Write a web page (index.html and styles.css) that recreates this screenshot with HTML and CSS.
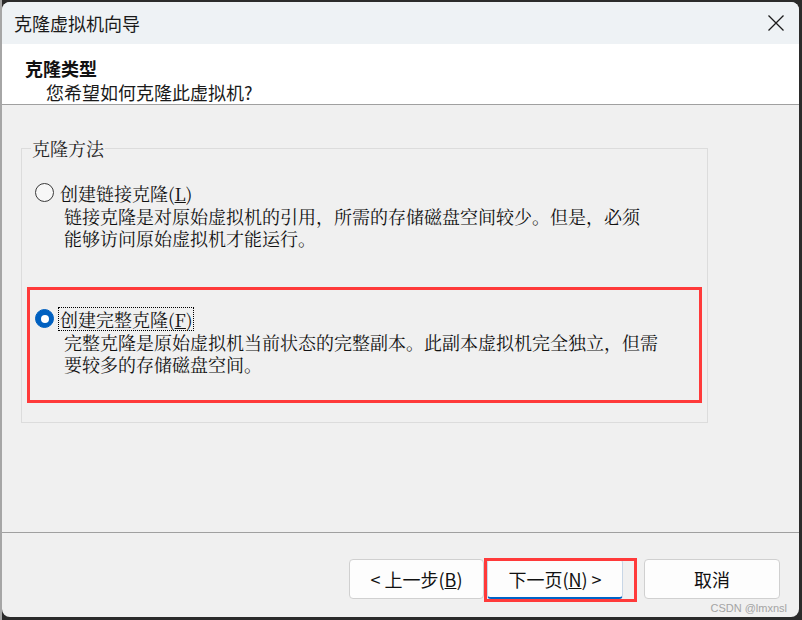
FILE: index.html
```html
<!DOCTYPE html>
<html lang="zh-CN">
<head>
<meta charset="utf-8">
<title>克隆虚拟机向导</title>
<link rel="stylesheet" href="styles.css">
</head>
<body>
<div class="dialog">
  <div class="titlebar">
    <span class="title">克隆虚拟机向导</span>
    <button class="close" aria-label="关闭">
      <svg width="16" height="16" viewBox="0 0 16 16"><path d="M0.5 0.5L15.5 15.5M15.5 0.5L0.5 15.5" stroke="#1b1b1b" stroke-width="1.3" fill="none"/></svg>
    </button>
  </div>
  <div class="header">
    <div class="h-title">克隆类型</div>
    <div class="h-sub">您希望如何克隆此虚拟机?</div>
  </div>
  <div class="content">
    <fieldset class="group">
      <legend>克隆方法</legend>
      <div class="option first">
        <div class="opt-row"><span class="radio"></span><span class="opt-label">创建链接克隆(<u>L</u>)</span></div>
        <div class="opt-desc">链接克隆是对原始虚拟机的引用，所需的存储磁盘空间较少。但是，必须<br>能够访问原始虚拟机才能运行。</div>
      </div>
      <div class="highlight">
        <div class="option">
          <div class="opt-row"><span class="radio checked"></span><span class="opt-label focused">创建完整克隆(<u>F</u>)</span></div>
          <div class="opt-desc">完整克隆是原始虚拟机当前状态的完整副本。此副本虚拟机完全独立，但需<br>要较多的存储磁盘空间。</div>
        </div>
      </div>
    </fieldset>
  </div>
  <div class="footer">
    <button class="btn btn-back">&lt; 上一步(<u>B</u>)</button>
    <button class="btn btn-next">下一页(<u>N</u>) &gt;</button>
    <button class="btn btn-cancel">取消</button>
  </div>
  <span class="watermark">CSDN @lmxnsl</span>
</div>
</body>
</html>
```

FILE: styles.css
```css
html, body {
  margin: 0;
  height: 100%;
}
body {
  background: linear-gradient(to right, #a6a6a6 0, #a6a6a6 2px, #2b2b2b 2px);
  padding: 2px 3px 3px 2px;
  box-sizing: border-box;
  font-family: "Noto Sans CJK SC", "Noto Sans", sans-serif;
  color: #1a1a1a;
}
.dialog {
  position: relative;
  width: 797px;
  height: 615px;
  background: #f0f0f0;
  border-radius: 8px;
  overflow: hidden;
  display: flex;
  flex-direction: column;
}
.titlebar {
  height: 42px;
  flex: none;
  background: #eef2f5;
  display: flex;
  align-items: center;
  justify-content: space-between;
  padding-left: 12px;
}
.title {
  font-size: 18px;
  line-height: 24px;
  color: #1a1a1a;
}
.close {
  width: 46px;
  height: 42px;
  border: 0;
  background: transparent;
  padding: 0;
  display: flex;
  align-items: center;
  justify-content: center;
}
.header {
  height: 60px;
  flex: none;
  background: #ffffff;
  border-bottom: 1px solid #a0a0a0;
  padding: 12px 0 0 23px;
  box-sizing: content-box;
}
.header > div {
  line-height: 24px;
  font-size: 18px;
  height: 24px;
}
.h-title {
  font-weight: 700;
  color: #111;
}
.h-sub {
  margin-left: 21px;
  color: #1a1a1a;
}
.header {
  height: 48px;
}
.content {
  flex: 1;
  padding: 31px 0 0 19px;
}
.group {
  margin: 0;
  width: 687px;
  box-sizing: border-box;
  border: 1px solid #dcdcdc;
  padding: 0 0 19px 0;
  font-family: "Noto Serif CJK SC", "Noto Sans CJK SC", serif;
  font-size: 18px;
  color: #111;
}
.group legend {
  margin-left: 9px;
  padding: 0 1px;
  line-height: 24px;
  font-size: 18px;
  color: #222;
}
.option {
  white-space: nowrap;
}
.option.first {
  margin: 20px 0 0 13px;
}
.opt-row {
  display: flex;
  align-items: center;
  height: 25px;
}
.radio {
  width: 19px;
  height: 19px;
  flex: none;
  border-radius: 50%;
  border: 1px solid #3a3a3a;
  background: #f7f7f7;
  box-sizing: border-box;
}
.radio.checked {
  background: #0060c0;
  border-color: #0060c0;
  display: flex;
  align-items: center;
  justify-content: center;
}
.radio.checked::after {
  content: "";
  width: 8px;
  height: 8px;
  border-radius: 50%;
  background: #ffffff;
}
.opt-label {
  margin-left: 4px;
  padding: 0 1px;
  line-height: 22px;
  border: 1px solid transparent;
}
.opt-label.focused {
  border: 1px dotted #000;
}
.opt-desc {
  margin-left: 29px;
  line-height: 22px;
  color: #111;
}
.highlight {
  margin: 38px 5px 0 5px;
  border: 3px solid #ff3a3a;
  padding: 16px 0 25px 5px;
}
.footer {
  height: 84px;
  flex: none;
  border-top: 1px solid #a0a0a0;
  display: flex;
  justify-content: flex-end;
  align-items: flex-start;
  padding: 26px 19px 0 0;
  box-sizing: border-box;
  height: 85px;
}
.btn {
  height: 40px;
  width: 136px;
  background: #fdfdfd;
  border: 1px solid #d0d0d0;
  border-radius: 4px;
  font-family: "Noto Sans CJK SC", "Noto Sans", sans-serif;
  font-size: 18px;
  color: #111;
  padding: 0;
}
.btn-back {
  width: 135px;
}
.btn-next {
  position: relative;
  margin-left: 3px;
  border-color: #c8d6e6;
  border-bottom: 2px solid #0063c6;
}
.btn-next::after {
  content: "";
  position: absolute;
  left: -4px;
  top: -2px;
  width: 153px;
  height: 44px;
  border: 3px solid #ff3a3a;
  box-sizing: border-box;
}
.btn-cancel {
  margin-left: 21px;
}
.watermark {
  position: absolute;
  right: 12px;
  bottom: 2px;
  font-family: "Liberation Sans", Arial, sans-serif;
  font-size: 11px;
  line-height: 13px;
  color: #a4a4a4;
}
```
